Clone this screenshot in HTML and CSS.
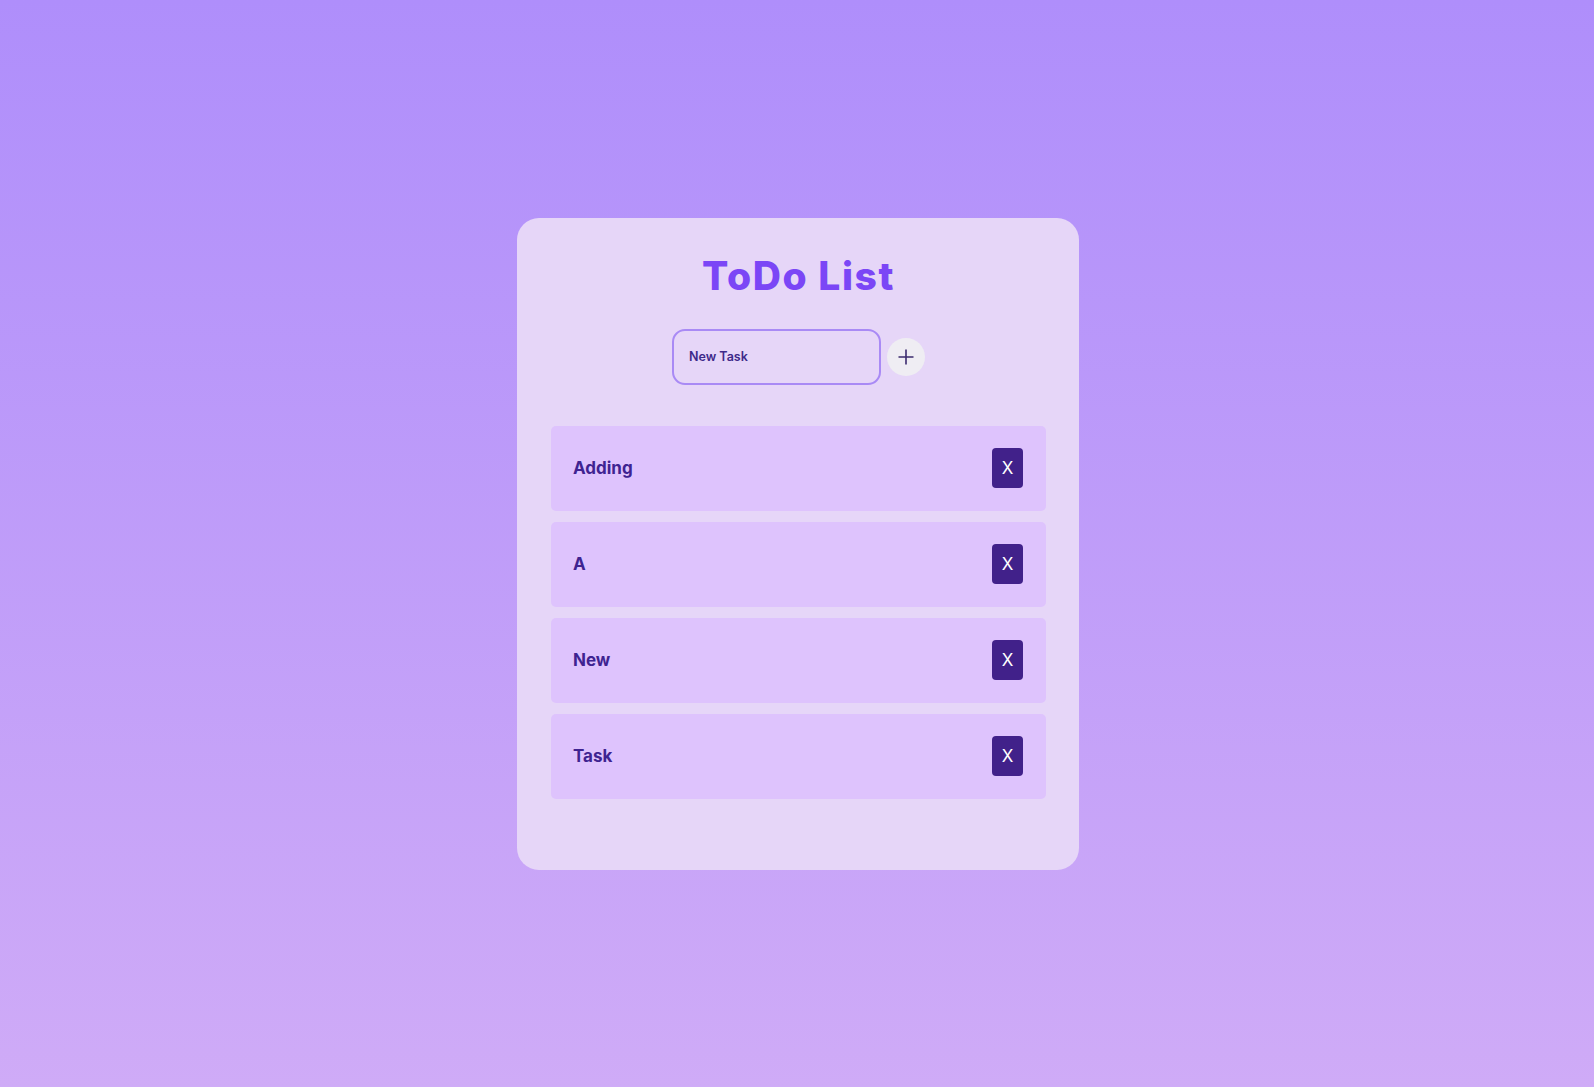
FILE: index.html
```html
<!DOCTYPE html>
<html lang="en">
<head>
<meta charset="utf-8">
<title>ToDo List</title>
<link rel="stylesheet" href="styles.css">
</head>
<body>
<main class="card">
  <h1 class="title">ToDo List</h1>
  <form class="add-row" onsubmit="return false">
    <input class="task-input" type="text" value="New Task">
    <button class="add-btn" type="button" aria-label="Add">
      <svg width="18" height="18" viewBox="0 0 18 18"><path d="M9 1.5v15M1.5 9h15" stroke="#3b2a6e" stroke-width="1.6" fill="none"/></svg>
    </button>
  </form>
  <ul class="list">
    <li class="item"><span class="item-text">Adding</span><button class="del-btn" type="button">X</button></li>
    <li class="item"><span class="item-text">A</span><button class="del-btn" type="button">X</button></li>
    <li class="item"><span class="item-text">New</span><button class="del-btn" type="button">X</button></li>
    <li class="item"><span class="item-text">Task</span><button class="del-btn" type="button">X</button></li>
  </ul>
</main>
</body>
</html>
```
FILE: styles.css
```css
html, body {
  margin: 0;
  height: 100%;
}
body {
  background: linear-gradient(180deg, #af8efb 0%, #cfabf7 100%);
  display: flex;
  align-items: center;
  justify-content: center;
  font-family: Inter, "Noto Sans", "Liberation Sans", sans-serif;
}
.card {
  width: 562px;
  box-sizing: border-box;
  margin-left: 2px;
  background: #e6d6f8;
  border-radius: 22px;
  padding: 34px 33px 71px 34px;
  display: flex;
  flex-direction: column;
  align-items: stretch;
}
.title {
  margin: 0;
  text-align: center;
  font-size: 39px;
  line-height: 48px;
  font-weight: 800;
  color: #7b46f6;
  letter-spacing: 1.6px;
}
.add-row {
  margin: 29px 0 0;
  display: flex;
  justify-content: center;
  align-items: center;
  gap: 6px;
}
.task-input {
  width: 209px;
  height: 56px;
  box-sizing: border-box;
  border: 2px solid #a98af5;
  border-radius: 13px;
  background: #e6d6f8;
  padding: 0 15px;
  font-family: inherit;
  font-size: 12.5px;
  font-weight: 600;
  color: #3e2a8a;
  outline: none;
}
.add-btn {
  width: 38px;
  height: 38px;
  border-radius: 50%;
  border: none;
  background: #efedf3;
  display: flex;
  align-items: center;
  justify-content: center;
  padding: 0;
}
.list {
  list-style: none;
  margin: 41px 0 0;
  padding: 0;
  display: flex;
  flex-direction: column;
  gap: 11px;
}
.item {
  height: 85px;
  box-sizing: border-box;
  background: #dec3fd;
  border-radius: 5px;
  display: flex;
  align-items: center;
  justify-content: space-between;
  padding: 0 23px 0 22px;
}
.item-text {
  font-size: 17px;
  font-weight: 700;
  color: #3f2391;
}
.del-btn {
  width: 31px;
  height: 40px;
  border: none;
  border-radius: 4px;
  background: #41218a;
  color: #ffffff;
  font-family: inherit;
  font-size: 17px;
  font-weight: 400;
  padding: 0;
}
```
